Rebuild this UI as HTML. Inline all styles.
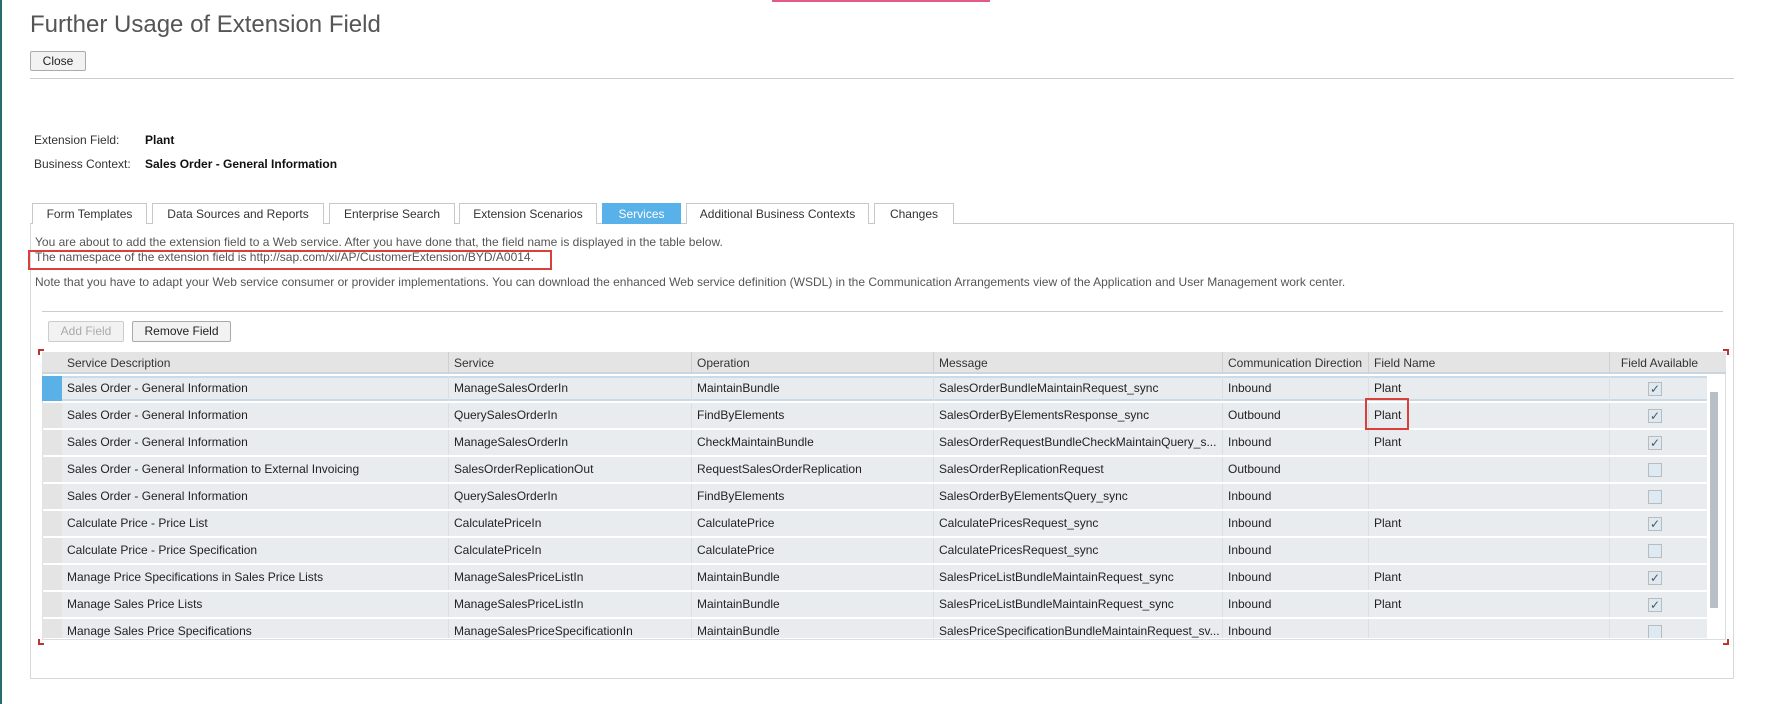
<!DOCTYPE html>
<html><head><meta charset="utf-8"><style>
*{box-sizing:border-box}
body{margin:0;width:1765px;height:704px;background:#fff;font-family:"Liberation Sans",Arial,sans-serif;position:relative;overflow:hidden;color:#333}
.a{position:absolute}
.t{font-size:12px;white-space:nowrap}
.btn{position:absolute;border:1px solid #aaa;background:#f2f2f2;font-size:12px;text-align:center;border-radius:2px;color:#222}
.tab{position:absolute;top:203px;height:21px;border:1px solid #c8c8c8;border-bottom:none;background:#fff;font-size:12px;text-align:center;line-height:20px;color:#333}
.row{position:absolute;left:42px;width:1665px;height:25px;background:#e9ecef}
.c{position:absolute;top:0;height:25px;line-height:25px;font-size:12px;color:#222;padding-left:5px;white-space:nowrap;border-left:1px solid #dcdfe2}
.cb{position:absolute;left:1606px;top:6px;width:14px;height:14px;border:1px solid #bbb;background:#dde9f3;font-size:12px;line-height:12px;text-align:center;color:#555}
.h{position:absolute;top:0;height:22px;line-height:22px;font-size:12px;color:#333;padding-left:5px;border-left:1px solid #d0d0d0}
</style></head><body>
<div class="a" style="left:0;top:0;width:2px;height:704px;background:#2a6b6b"></div>
<div class="a" style="left:772px;top:0;width:218px;height:2px;background:#e35a8a"></div>
<div class="a" style="left:30px;top:11px;font-size:24px;color:#555">Further Usage of Extension Field</div>
<div class="btn" style="left:30px;top:51px;width:56px;height:20px;line-height:18px">Close</div>
<div class="a" style="left:30px;top:78px;width:1704px;height:1px;background:#ccc"></div>
<div class="a t" style="left:34px;top:133px;color:#333">Extension Field:</div>
<div class="a t" style="left:145px;top:133px;font-weight:bold;color:#111">Plant</div>
<div class="a t" style="left:34px;top:157px;color:#333">Business Context:</div>
<div class="a t" style="left:145px;top:157px;font-weight:bold;color:#111">Sales Order - General Information</div>

<div class="a" style="left:30px;top:223px;width:1704px;height:456px;border:1px solid #d8d8d8;border-top:1px solid #c8c8c8"></div>
<div class="tab" style="left:32px;width:115px">Form Templates</div>
<div class="tab" style="left:152px;width:172px">Data Sources and Reports</div>
<div class="tab" style="left:329px;width:126px">Enterprise Search</div>
<div class="tab" style="left:459px;width:138px">Extension Scenarios</div>
<div class="tab" style="left:602px;width:79px;background:#58b1e8;border-color:#58b1e8;color:#fff">Services</div>
<div class="tab" style="left:686px;width:183px">Additional Business Contexts</div>
<div class="tab" style="left:874px;width:80px">Changes</div>

<div class="a t" style="left:35px;top:235px;color:#555">You are about to add the extension field to a Web service. After you have done that, the field name is displayed in the table below.</div>
<div class="a t" style="left:35px;top:250px;color:#555">The namespace of the extension field is http://sap.com/xi/AP/CustomerExtension/BYD/A0014.</div>
<div class="a" style="left:28px;top:250px;width:524px;height:20px;border:2px solid #d9403c"></div>
<div class="a t" style="left:35px;top:275px;color:#555">Note that you have to adapt your Web service consumer or provider implementations. You can download the enhanced Web service definition (WSDL) in the Communication Arrangements view of the Application and User Management work center.</div>
<div class="a" style="left:42px;top:311px;width:1681px;height:1px;background:#ccc"></div>
<div class="btn" style="left:48px;top:321px;width:76px;height:21px;line-height:19px;color:#aaa;border-color:#ccc">Add Field</div>
<div class="btn" style="left:132px;top:321px;width:99px;height:21px;line-height:19px">Remove Field</div>

<div class="a" style="left:38px;top:349px;width:6px;height:6px;border-left:2px solid #b33;border-top:2px solid #b33"></div>
<div class="a" style="left:1723px;top:349px;width:6px;height:6px;border-right:2px solid #b33;border-top:2px solid #b33"></div>
<div class="a" style="left:38px;top:639px;width:6px;height:6px;border-left:2px solid #b33;border-bottom:2px solid #b33"></div>
<div class="a" style="left:1723px;top:639px;width:6px;height:6px;border-right:2px solid #b33;border-bottom:2px solid #b33"></div>
<div class="a" style="left:42px;top:352px;width:1684px;height:288px;border:1px solid #ddd;border-top:none"></div>

<div class="a" style="left:42px;top:352px;width:1684px;height:22px;background:#e4e4e4;border-bottom:2px solid #c9d6e0">
<div class="h" style="left:20px;border:none">Service Description</div>
<div class="h" style="left:406px">Service</div>
<div class="h" style="left:649px">Operation</div>
<div class="h" style="left:891px">Message</div>
<div class="h" style="left:1180px">Communication Direction</div>
<div class="h" style="left:1326px">Field Name</div>
<div class="h" style="left:1567px;width:100px;text-align:center;padding:0">Field Available</div>
</div>

<div class="a" style="left:42px;top:376px;width:1684px;height:262px;overflow:hidden">
<div class="row" style="left:0;top:0;border-top:2px solid #c9dbe8;border-bottom:2px solid #c9dbe8"><div class="a" style="left:0;top:-2px;width:20px;height:25px;background:#5ab1e8"></div><div class="c" style="left:20px;border:none;top:-2px">Sales Order - General Information</div><div class="c" style="left:406px;top:-2px">ManageSalesOrderIn</div><div class="c" style="left:649px;top:-2px">MaintainBundle</div><div class="c" style="left:891px;top:-2px">SalesOrderBundleMaintainRequest_sync</div><div class="c" style="left:1180px;top:-2px">Inbound</div><div class="c" style="left:1326px;top:-2px">Plant</div><div class="c" style="left:1567px;top:-2px;width:98px"></div><div class="cb" style="top:4px">✓</div></div>
<div class="row" style="left:0;top:27px"><div class="a" style="left:0;top:0;width:20px;height:25px;background:#e4e4e4"></div><div class="c" style="left:20px;border:none">Sales Order - General Information</div><div class="c" style="left:406px">QuerySalesOrderIn</div><div class="c" style="left:649px">FindByElements</div><div class="c" style="left:891px">SalesOrderByElementsResponse_sync</div><div class="c" style="left:1180px">Outbound</div><div class="c" style="left:1326px">Plant</div><div class="c" style="left:1567px;width:98px"></div><div class="cb">✓</div></div>
<div class="row" style="left:0;top:54px"><div class="a" style="left:0;top:0;width:20px;height:25px;background:#e4e4e4"></div><div class="c" style="left:20px;border:none">Sales Order - General Information</div><div class="c" style="left:406px">ManageSalesOrderIn</div><div class="c" style="left:649px">CheckMaintainBundle</div><div class="c" style="left:891px">SalesOrderRequestBundleCheckMaintainQuery_s...</div><div class="c" style="left:1180px">Inbound</div><div class="c" style="left:1326px">Plant</div><div class="c" style="left:1567px;width:98px"></div><div class="cb">✓</div></div>
<div class="row" style="left:0;top:81px"><div class="a" style="left:0;top:0;width:20px;height:25px;background:#e4e4e4"></div><div class="c" style="left:20px;border:none">Sales Order - General Information to External Invoicing</div><div class="c" style="left:406px">SalesOrderReplicationOut</div><div class="c" style="left:649px">RequestSalesOrderReplication</div><div class="c" style="left:891px">SalesOrderReplicationRequest</div><div class="c" style="left:1180px">Outbound</div><div class="c" style="left:1326px"></div><div class="c" style="left:1567px;width:98px"></div><div class="cb"></div></div>
<div class="row" style="left:0;top:108px"><div class="a" style="left:0;top:0;width:20px;height:25px;background:#e4e4e4"></div><div class="c" style="left:20px;border:none">Sales Order - General Information</div><div class="c" style="left:406px">QuerySalesOrderIn</div><div class="c" style="left:649px">FindByElements</div><div class="c" style="left:891px">SalesOrderByElementsQuery_sync</div><div class="c" style="left:1180px">Inbound</div><div class="c" style="left:1326px"></div><div class="c" style="left:1567px;width:98px"></div><div class="cb"></div></div>
<div class="row" style="left:0;top:135px"><div class="a" style="left:0;top:0;width:20px;height:25px;background:#e4e4e4"></div><div class="c" style="left:20px;border:none">Calculate Price - Price List</div><div class="c" style="left:406px">CalculatePriceIn</div><div class="c" style="left:649px">CalculatePrice</div><div class="c" style="left:891px">CalculatePricesRequest_sync</div><div class="c" style="left:1180px">Inbound</div><div class="c" style="left:1326px">Plant</div><div class="c" style="left:1567px;width:98px"></div><div class="cb">✓</div></div>
<div class="row" style="left:0;top:162px"><div class="a" style="left:0;top:0;width:20px;height:25px;background:#e4e4e4"></div><div class="c" style="left:20px;border:none">Calculate Price - Price Specification</div><div class="c" style="left:406px">CalculatePriceIn</div><div class="c" style="left:649px">CalculatePrice</div><div class="c" style="left:891px">CalculatePricesRequest_sync</div><div class="c" style="left:1180px">Inbound</div><div class="c" style="left:1326px"></div><div class="c" style="left:1567px;width:98px"></div><div class="cb"></div></div>
<div class="row" style="left:0;top:189px"><div class="a" style="left:0;top:0;width:20px;height:25px;background:#e4e4e4"></div><div class="c" style="left:20px;border:none">Manage Price Specifications in Sales Price Lists</div><div class="c" style="left:406px">ManageSalesPriceListIn</div><div class="c" style="left:649px">MaintainBundle</div><div class="c" style="left:891px">SalesPriceListBundleMaintainRequest_sync</div><div class="c" style="left:1180px">Inbound</div><div class="c" style="left:1326px">Plant</div><div class="c" style="left:1567px;width:98px"></div><div class="cb">✓</div></div>
<div class="row" style="left:0;top:216px"><div class="a" style="left:0;top:0;width:20px;height:25px;background:#e4e4e4"></div><div class="c" style="left:20px;border:none">Manage Sales Price Lists</div><div class="c" style="left:406px">ManageSalesPriceListIn</div><div class="c" style="left:649px">MaintainBundle</div><div class="c" style="left:891px">SalesPriceListBundleMaintainRequest_sync</div><div class="c" style="left:1180px">Inbound</div><div class="c" style="left:1326px">Plant</div><div class="c" style="left:1567px;width:98px"></div><div class="cb">✓</div></div>
<div class="row" style="left:0;top:243px"><div class="a" style="left:0;top:0;width:20px;height:25px;background:#e4e4e4"></div><div class="c" style="left:20px;border:none">Manage Sales Price Specifications</div><div class="c" style="left:406px">ManageSalesPriceSpecificationIn</div><div class="c" style="left:649px">MaintainBundle</div><div class="c" style="left:891px">SalesPriceSpecificationBundleMaintainRequest_sv...</div><div class="c" style="left:1180px">Inbound</div><div class="c" style="left:1326px"></div><div class="c" style="left:1567px;width:98px"></div><div class="cb"></div></div>
</div>
<div class="a" style="left:1710px;top:392px;width:8px;height:216px;background:#b8bfc6"></div>
<div class="a" style="left:1365px;top:398px;width:44px;height:32px;border:2px solid #d9403c"></div>
</body></html>
